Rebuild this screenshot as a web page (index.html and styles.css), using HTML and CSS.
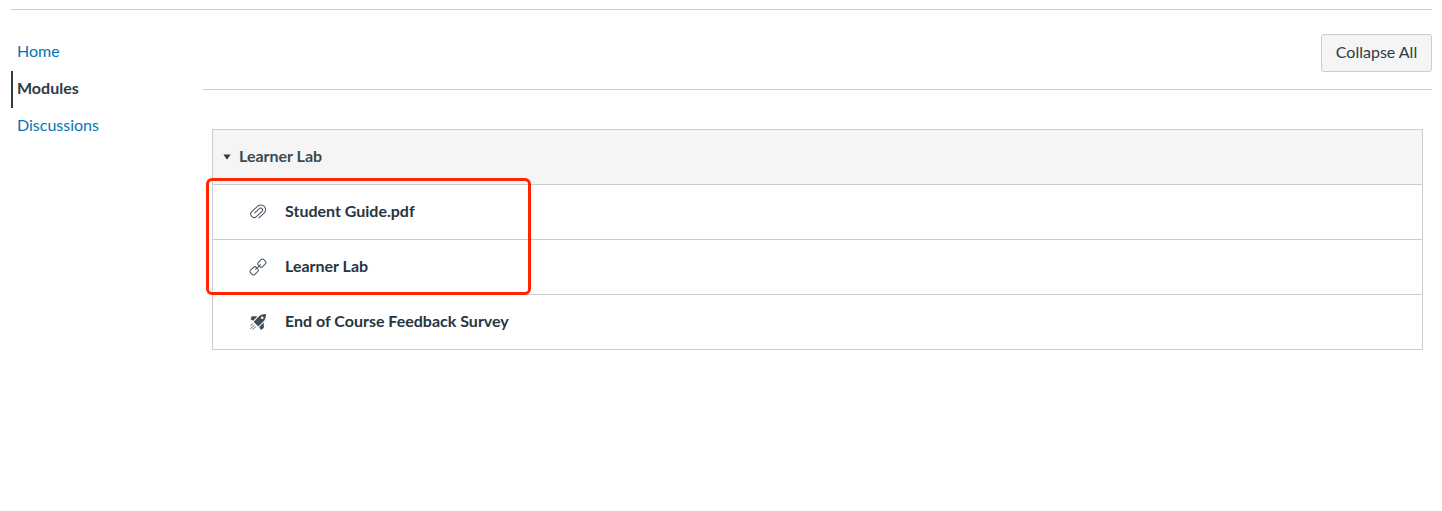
FILE: index.html
```html
<!DOCTYPE html>
<html lang="en">
<head>
<meta charset="utf-8">
<title>Modules</title>
<link rel="stylesheet" href="styles.css">
</head>
<body>
<div class="layout">
  <nav class="course-nav">
    <a class="nav-link">Home</a>
    <a class="nav-link active">Modules</a>
    <a class="nav-link">Discussions</a>
  </nav>
  <main class="content">
    <div class="toolbar"><button class="btn">Collapse All</button></div>
    <section class="module">
      <header class="module-header">
        <svg class="caret" viewBox="0 0 8 6"><path d="M.4.4h7.2L4.3 5.3h-.6z"/></svg>
        <span class="module-title">Learner Lab</span>
      </header>
      <div class="item">
        <svg class="icon line" viewBox="0 0 18 18"><path transform="translate(9.100 8.900) rotate(-43)" d="M-3.800 4.900H3.600A4.700 4.700 0 0 0 3.600-4.500H-4.400A3.350 3.350 0 0 0-4.400 2.200H3.200A1.900 1.900 0 0 0 3.200-1.600H-3.400"/></svg>
        <span class="item-title">Student Guide.pdf</span>
      </div>
      <div class="item">
        <svg class="icon line" viewBox="0 0 18 18"><g transform="translate(9 9) rotate(-45)"><rect x="1.500" y="-3" width="7.900" height="6" rx="2"/><rect x="-9.400" y="-3" width="7.900" height="6" rx="2"/><path d="M-3.800 0h7.600"/></g></svg>
        <span class="item-title">Learner Lab</span>
      </div>
      <div class="item">
        <svg class="icon solid" viewBox="0 0 18 18"><path fill-rule="evenodd" d="M16.900 1.100c.1 3.300-.6 5.500-2.500 7.500l-5 5-4.800-4.800 5-5c2-2 4.100-2.800 7.300-2.700zM13.200 3.500a1.300 1.300 0 1 0 0 2.600 1.300 1.300 0 0 0 0-2.600zM8.500 3.200 4.100 7.700 1.500 6.200l1.300-3zM14.800 9.500v5.400l-3 2-1.600-3z"/><path class="flame" d="m3.900 10.400-2.400 2.400M5.400 11.900l-4 4M7 13.400l-3.200 3.200"/></svg>
        <span class="item-title">End of Course Feedback Survey</span>
      </div>
      <div class="highlight"></div>
    </section>
  </main>
</div>
</body>
</html>
```
FILE: styles.css
```css
* { box-sizing: border-box; }
body {
  margin: 0;
  padding: 9px 10px 0 11px;
  background: #fff;
  color: #2d3b45;
  font: 16px/24px Lato, sans-serif;
}
.layout {
  display: flex;
  border-top: 1px solid #c7cdd1;
}
.course-nav {
  display: flex;
  flex-direction: column;
  width: 192px;
  padding-top: 24px;
}
.nav-link {
  height: 37px;
  padding: 5px 0 0 6px;
  line-height: 24px;
  color: #0374b5;
}
.nav-link.active {
  padding-left: 4px;
  border-left: 2px solid #2d3b45;
  color: #2d3b45;
  font-weight: 700;
}
.content { flex: 1; }
.toolbar {
  display: flex;
  justify-content: flex-end;
  height: 80px;
  padding-top: 24px;
  border-bottom: 1px solid #c7cdd1;
}
.btn {
  width: 111px;
  height: 38px;
  padding: 0 0 2px;
  border: 1px solid #c7cdd1;
  border-radius: 3px;
  background: #f5f5f5;
  color: #2d3b45;
  font: 16px/24px Lato, sans-serif;
}
.module {
  position: relative;
  margin: 39px 9px 0;
  border: 1px solid #c7cdd1;
}
.module-header {
  display: flex;
  align-items: center;
  gap: 8px;
  height: 54px;
  padding-left: 10px;
  background: #f5f5f5;
  font-weight: 700;
}
.module-title, .item-title { padding-bottom: 2px; }
.module-title { color: #3c4851; }
.caret { width: 8px; height: 6px; fill: #2d3b45; }
.item {
  display: flex;
  align-items: center;
  gap: 18px;
  height: 55px;
  padding-left: 36px;
  border-top: 1px solid #c7cdd1;
  color: #273540;
  font-weight: 700;
}
.icon { width: 18px; height: 18px; }
.line { fill: none; stroke: #485460; stroke-width: 1; }
.solid { fill: #3f4c56; }
.flame { stroke: #3f4c56; stroke-width: .9; }
.highlight {
  position: absolute;
  left: -7px;
  top: 48px;
  width: 325px;
  height: 117px;
  border: 3px solid #ff2600;
  border-radius: 6px;
}
```
